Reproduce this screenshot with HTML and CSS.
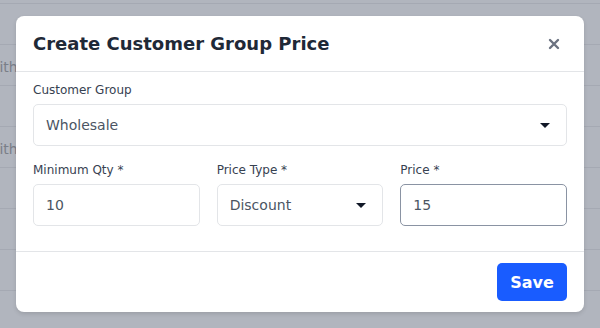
FILE: index.html
```html
<!DOCTYPE html>
<html lang="en">
<head>
    <meta charset="UTF-8">
    <meta name="viewport" content="width=device-width, initial-scale=1.0">
    <title>Create Customer Group Price</title>
    <link rel="stylesheet" href="styles.css">
</head>
<body>
    <div class="page">
        <div class="page-row"></div>
        <div class="page-row"><span class="cell-text">with</span></div>
        <div class="page-row"></div>
        <div class="page-row"><span class="cell-text">with</span></div>
        <div class="page-row"></div>
        <div class="page-row"></div>
        <div class="page-row"></div>
        <div class="page-row"></div>
    </div>

    <div class="modal">
        <div class="modal-header">
            <h2>Create Customer Group Price</h2>
            <button class="close-btn" aria-label="Close">
                <svg width="12" height="12" viewBox="0 0 12 12">
                    <path d="M2 2 L10 10 M10 2 L2 10" stroke="#6b7280" stroke-width="2.4" stroke-linecap="round"/>
                </svg>
            </button>
        </div>
        <form class="modal-body">
            <div class="field">
                <label>Customer Group</label>
                <div class="control select">
                    <span>Wholesale</span>
                    <span class="caret"></span>
                </div>
            </div>
            <div class="field-row">
                <div class="field">
                    <label>Minimum Qty *</label>
                    <div class="control"><span>10</span></div>
                </div>
                <div class="field">
                    <label>Price Type *</label>
                    <div class="control select">
                        <span>Discount</span>
                        <span class="caret"></span>
                    </div>
                </div>
                <div class="field">
                    <label>Price *</label>
                    <div class="control focused"><span>15</span></div>
                </div>
            </div>
        </form>
        <div class="modal-footer">
            <button class="save-btn">Save</button>
        </div>
    </div>
</body>
</html>
```

FILE: styles.css
```css
* {
    box-sizing: border-box;
}

body {
    margin: 0;
    height: 328px;
    overflow: hidden;
    background-color: #b1b5be;
    font-family: "DejaVu Sans", sans-serif;
}

.page {
    padding-top: 3px;
}

.page-row {
    height: 41px;
    border-top: 1px solid #a5a9b3;
    display: flex;
    align-items: center;
    padding-top: 4px;
}

.cell-text {
    margin-left: -12px;
    font-size: 14px;
    color: #7a7e88;
}

.modal {
    position: absolute;
    top: 16px;
    left: 16px;
    width: 568px;
    height: 296px;
    background: #fff;
    border-radius: 8px;
    box-shadow: 0 2px 4px rgba(0, 0, 0, 0.12);
    display: flex;
    flex-direction: column;
}

.modal-header {
    height: 56px;
    padding: 0 24px 0 17px;
    display: flex;
    align-items: center;
    justify-content: space-between;
    border-bottom: 1px solid #e3e5e8;
}

.modal-header h2 {
    margin: 0;
    font-size: 18px;
    font-weight: bold;
    color: #1f2937;
}

.close-btn {
    border: 0;
    background: none;
    padding: 0;
    width: 12px;
    height: 12px;
    display: flex;
}

.modal-body {
    margin: 0;
    padding: 11px 17px 0 17px;
    height: 180px;
    border-bottom: 1px solid #e3e5e8;
}

.field {
    display: flex;
    flex-direction: column;
}

.field label {
    font-size: 12px;
    color: #374151;
    margin-bottom: 7px;
}

.field-row {
    margin-top: 17px;
    display: grid;
    grid-template-columns: 1fr 1fr 1fr;
    gap: 17px;
}

.control {
    height: 42px;
    border: 1px solid #e3e5e8;
    border-radius: 5px;
    padding: 0 12px;
    display: flex;
    align-items: center;
    justify-content: space-between;
    font-size: 14px;
    color: #4b5563;
}

.control.focused {
    border-color: #8a93a3;
}

.caret {
    width: 0;
    height: 0;
    border-left: 5px solid transparent;
    border-right: 5px solid transparent;
    border-top: 5px solid #111827;
    margin-right: 4px;
}

.modal-footer {
    flex: 1;
    display: flex;
    align-items: center;
    justify-content: flex-end;
    padding: 0 17px;
}

.save-btn {
    width: 70px;
    height: 38px;
    border: 0;
    border-radius: 5px;
    background-color: #195cff;
    color: #fff;
    font-family: "DejaVu Sans", sans-serif;
    font-size: 16px;
    font-weight: bold;
}
```
